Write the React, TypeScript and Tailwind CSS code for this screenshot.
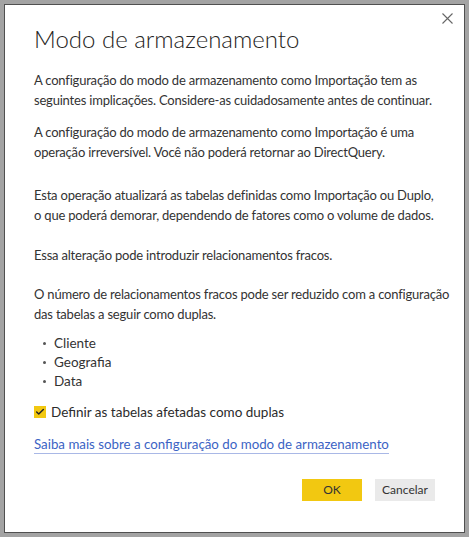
import { Check } from 'lucide-react';

const tables = ['Cliente', 'Geografia', 'Data'];

const App = () => {
  return (
    <div
      className="w-[469px] h-[537px] bg-[#a3a3a3] p-[4px]"
      style={{ fontFamily: 'Lato, "Liberation Sans", sans-serif' }}
    >
      <div className="relative h-full bg-white border border-[#505050] pl-[29px] pr-[8px] text-[#333333]">
        <button className="absolute left-[437px] top-[8px] w-[11px] h-[11px] text-[#666666]" aria-label="Fechar">
          <svg viewBox="0 0 11 11" width="11" height="11" stroke="currentColor" strokeWidth="1.1" fill="none">
            <path d="M0.5 0.5 L10.5 10.5 M10.5 0.5 L0.5 10.5" />
          </svg>
        </button>
        <h1 className="pt-[20px] text-[24px] font-light leading-[28px] text-[#252423] whitespace-nowrap">
          Modo de armazenamento
        </h1>
        <div className="mt-[17px] text-[13px] leading-[20px] whitespace-nowrap">
          <div className="tracking-[-0.2px]">
            <p>
              A configuração do modo de armazenamento como Importação tem as
              <br />
              seguintes implicações. Considere-as cuidadosamente antes de continuar.
            </p>
            <p className="mt-[12px]">
              A configuração do modo de armazenamento como Importação é uma
              <br />
              operação irreversível. Você não poderá retornar ao DirectQuery.
            </p>
            <p className="mt-[23px]">
              Esta operação atualizará as tabelas definidas como Importação ou Duplo,
              <br />
              o que poderá demorar, dependendo de fatores como o volume de dados.
            </p>
            <p className="mt-[20px]">Essa alteração pode introduzir relacionamentos fracos.</p>
            <p className="mt-[19px]">
              O número de relacionamentos fracos pode ser reduzido com a configuração
              <br />
              das tabelas a seguir como duplas.
            </p>
          </div>
          <ul className="mt-[10px] pl-[9px] text-[13.5px] leading-[19px]">
            {tables.map((t) => (
              <li key={t} className="flex items-center gap-[8px]">
                <span className="w-[3px] h-[3px] rounded-full bg-[#555555]" />
                {t}
              </li>
            ))}
          </ul>
        </div>
        <label className="mt-[11px] flex items-center gap-[5px] text-[13.5px] leading-[20px] text-[#2b2b2b] whitespace-nowrap">
          <span className="w-[12px] h-[12px] bg-[#f2c811] flex items-center justify-center">
            <Check size={10} strokeWidth={3.5} className="text-[#252423]" />
          </span>
          Definir as tabelas afetadas como duplas
        </label>
        <div className="mt-[13px] flex">
          <a
            href="#"
            className="text-[13.3px] leading-[18px] text-[#3b63c4] border-b border-[#a9b8e6] whitespace-nowrap"
          >
            Saiba mais sobre a configuração do modo de armazenamento
          </a>
        </div>
        <div className="mt-[25px] flex justify-end gap-[13px] pr-[21px]">
          <button className="w-[60px] h-[22px] bg-[#f2c811] text-[12px] text-[#333333]">OK</button>
          <button className="w-[60px] h-[22px] bg-[#eaeaea] text-[12px] text-[#333333]">Cancelar</button>
        </div>
      </div>
    </div>
  );
};

export default App;
